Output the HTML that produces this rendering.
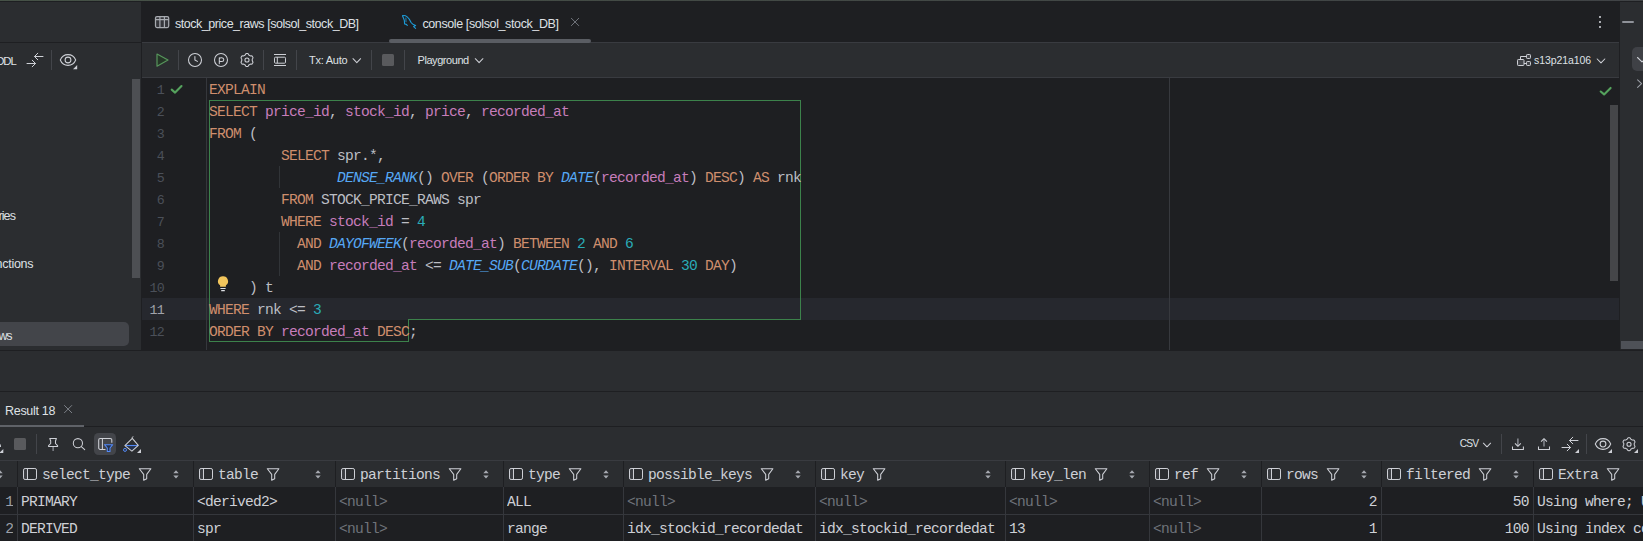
<!DOCTYPE html>
<html><head><meta charset="utf-8"><title>console</title>
<style>
html,body{margin:0;padding:0;background:#2b2d30;}
body{width:1643px;height:541px;position:relative;overflow:hidden;font-family:"Liberation Sans",sans-serif;font-size:12px;color:#dfe1e5;}
.a{position:absolute;}
.ui{position:absolute;white-space:pre;line-height:16px;height:16px;color:#dfe1e5;}
.ln{position:absolute;left:142px;width:22px;text-align:right;line-height:22px;height:22px;padding-top:2px;color:#4b5059;font-family:"Liberation Mono",monospace;font-size:13.3px;letter-spacing:-0.78px;}
.cl{position:absolute;left:209px;line-height:22px;height:22px;padding-top:0.5px;color:#bcbec4;font-family:"Liberation Mono",monospace;font-size:14.6px;letter-spacing:-0.76px;white-space:pre;}
.k{color:#cf8e6d}.c{color:#c77dbb}.f{color:#56a8f5;font-style:italic}.n{color:#2aacb8}
.sep{position:absolute;width:1px;background:#43454a;}
.g{position:absolute;background:#3c824b;}
.th{position:absolute;top:461px;height:26px;line-height:26px;padding-top:0.5px;font-family:"Liberation Mono",monospace;font-size:14.6px;letter-spacing:-0.76px;color:#ced0d6;white-space:pre;}
.td{position:absolute;height:26px;line-height:26px;padding-top:0.5px;box-sizing:border-box;font-family:"Liberation Mono",monospace;font-size:14.6px;letter-spacing:-0.76px;color:#ced0d6;white-space:pre;overflow:hidden;}
.nu{color:#6f737a}
.vs{position:absolute;width:1px;}
#ov{position:absolute;left:0;top:0;overflow:hidden}
</style></head><body>

<div class="a" style="left:0;top:0;width:1643px;height:1px;background:linear-gradient(90deg,#465247,#434a45 40%,#404346)"></div>
<div class="a" style="left:0;top:1px;width:1643px;height:1px;background:#1e1f22"></div>
<div class="a" style="left:0;top:42px;width:142px;height:1px;background:#1e1f22"></div>
<div class="a" style="left:141px;top:2px;width:1px;height:348px;background:#1e1f22"></div>
<div class="a" style="left:142px;top:2px;width:1478px;height:40px;background:#1e1f22"></div>
<div class="a" style="left:142px;top:42px;width:1478px;height:1px;background:#393b40"></div>
<div class="a" style="left:142px;top:77px;width:1478px;height:1px;background:#393b40"></div>
<div class="a" style="left:142px;top:78px;width:1478px;height:272px;background:#1e1f22"></div>
<div class="a" style="left:142px;top:298px;width:1477px;height:22px;background:#26282e"></div>
<div class="a" style="left:206px;top:78px;width:1px;height:272px;background:#35373c"></div>
<div class="a" style="left:1169px;top:78px;width:1px;height:272px;background:#37393e"></div>
<div class="a" style="left:1619px;top:2px;width:1px;height:348px;background:#1e1f22"></div>
<div class="a" style="left:0;top:350px;width:1643px;height:1px;background:#1e1f22"></div>
<div class="a" style="left:1620px;top:349px;width:23px;height:1px;background:#232427"></div>
<div class="a" style="left:0;top:391px;width:1643px;height:1px;background:#1e1f22"></div>
<div class="a" style="left:0;top:426px;width:1643px;height:1px;background:#1e1f22"></div>

<div class="a" style="left:132px;top:79px;width:8px;height:199px;background:#4d4f53"></div>
<div class="a" style="left:-6px;top:322px;width:135px;height:24px;background:#43454a;border-radius:5px"></div>
<div class="ui" style="left:-3.80px;top:53.08px;font-size:11.3px;letter-spacing:-1.003px;color:#dfe1e5;">DDL</div>
<div class="ui" style="left:-1.60px;top:207.67px;font-size:12.5px;letter-spacing:-0.889px;color:#dfe1e5;">ries</div>
<div class="ui" style="left:-4.50px;top:255.67px;font-size:12.5px;letter-spacing:-0.258px;color:#dfe1e5;">nctions</div>
<div class="ui" style="left:-1.50px;top:328.17px;font-size:12.5px;letter-spacing:-1.391px;color:#dfe1e5;">ws</div>
<div class="sep" style="left:51px;top:50px;height:20px"></div>
<div class="ui" style="left:175.00px;top:15.67px;font-size:12.5px;letter-spacing:-0.464px;color:#dfe1e5;">stock_price_raws [solsol_stock_DB]</div>
<div class="ui" style="left:422.40px;top:15.67px;font-size:12.5px;letter-spacing:-0.388px;color:#dfe1e5;">console [solsol_stock_DB]</div>
<div class="a" style="left:389px;top:39px;width:202px;height:4px;background:#5a5d63;border-radius:2px"></div>
<div class="sep" style="left:178px;top:50px;height:20px"></div>
<div class="sep" style="left:263px;top:50px;height:20px"></div>
<div class="sep" style="left:296px;top:50px;height:20px"></div>
<div class="ui" style="left:309.00px;top:52.19px;font-size:11px;letter-spacing:-0.257px;color:#dfe1e5;">Tx: Auto</div>
<div class="sep" style="left:371px;top:50px;height:20px"></div>
<div class="a" style="left:382px;top:54px;width:12px;height:12px;background:#595a5d;border-radius:1.5px"></div>
<div class="sep" style="left:404px;top:50px;height:20px"></div>
<div class="ui" style="left:417.50px;top:52.19px;font-size:11px;letter-spacing:-0.436px;color:#dfe1e5;">Playground</div>
<div class="ui" style="left:1534.00px;top:52.36px;font-size:10.5px;letter-spacing:-0.081px;color:#dfe1e5;">s13p21a106</div>
<div class="a" style="left:1622px;top:21px;width:12px;height:2px;background:#8f9299;border-radius:1px"></div>
<div class="a" style="left:1632px;top:47px;width:20px;height:24px;background:#3f4146;border-radius:5px"></div>
<div class="a" style="left:1621px;top:341px;width:22px;height:8px;background:#4e5157"></div>
<div class="a" style="left:1610px;top:105px;width:8px;height:176px;background:#454649"></div>
<div class="a" style="left:279px;top:166px;width:1px;height:22px;background:#313438"></div>
<div class="a" style="left:279px;top:232px;width:1px;height:44px;background:#313438"></div>
<div class="g" style="left:209px;top:100px;width:592px;height:1px"></div>
<div class="g" style="left:800px;top:100px;width:1px;height:220px"></div>
<div class="g" style="left:408px;top:319px;width:393px;height:1px"></div>
<div class="g" style="left:408px;top:319px;width:1px;height:23px"></div>
<div class="g" style="left:209px;top:341px;width:200px;height:1px"></div>
<div class="g" style="left:209px;top:100px;width:1px;height:242px"></div>
<div class="ln" style="top:78px;color:#4b5059">1</div><div class="cl" style="top:78px"><span class="k">EXPLAIN</span></div>
<div class="ln" style="top:100px;color:#4b5059">2</div><div class="cl" style="top:100px"><span class="k">SELECT</span> <span class="c">price_id</span>, <span class="c">stock_id</span>, <span class="c">price</span>, <span class="c">recorded_at</span></div>
<div class="ln" style="top:122px;color:#4b5059">3</div><div class="cl" style="top:122px"><span class="k">FROM</span> (</div>
<div class="ln" style="top:144px;color:#4b5059">4</div><div class="cl" style="top:144px">         <span class="k">SELECT</span> spr.*,</div>
<div class="ln" style="top:166px;color:#4b5059">5</div><div class="cl" style="top:166px">                <span class="f">DENSE_RANK</span>() <span class="k">OVER</span> (<span class="k">ORDER BY</span> <span class="f">DATE</span>(<span class="c">recorded_at</span>) <span class="k">DESC</span>) <span class="k">AS</span> rnk</div>
<div class="ln" style="top:188px;color:#4b5059">6</div><div class="cl" style="top:188px">         <span class="k">FROM</span> STOCK_PRICE_RAWS spr</div>
<div class="ln" style="top:210px;color:#4b5059">7</div><div class="cl" style="top:210px">         <span class="k">WHERE</span> <span class="c">stock_id</span> = <span class="n">4</span></div>
<div class="ln" style="top:232px;color:#4b5059">8</div><div class="cl" style="top:232px">           <span class="k">AND</span> <span class="f">DAYOFWEEK</span>(<span class="c">recorded_at</span>) <span class="k">BETWEEN</span> <span class="n">2</span> <span class="k">AND</span> <span class="n">6</span></div>
<div class="ln" style="top:254px;color:#4b5059">9</div><div class="cl" style="top:254px">           <span class="k">AND</span> <span class="c">recorded_at</span> &lt;= <span class="f">DATE_SUB</span>(<span class="f">CURDATE</span>(), <span class="k">INTERVAL</span> <span class="n">30</span> <span class="k">DAY</span>)</div>
<div class="ln" style="top:276px;color:#4b5059">10</div><div class="cl" style="top:276px">     ) t</div>
<div class="ln" style="top:298px;color:#a1a3ab">11</div><div class="cl" style="top:298px"><span class="k">WHERE</span> rnk &lt;= <span class="n">3</span></div>
<div class="ln" style="top:320px;color:#4b5059">12</div><div class="cl" style="top:320px"><span class="k">ORDER BY</span> <span class="c">recorded_at</span> <span class="k">DESC</span>;</div>
<div class="ui" style="left:5.00px;top:402.67px;font-size:12.5px;letter-spacing:-0.290px;color:#dfe1e5;">Result 18</div>
<div class="a" style="left:0;top:425px;width:84px;height:2px;background:#5f6268"></div>
<div class="a" style="left:14px;top:438px;width:12px;height:12px;background:#595a5d;border-radius:1.5px"></div>
<div class="sep" style="left:36px;top:434px;height:20px"></div>
<div class="a" style="left:94px;top:433px;width:22px;height:22px;background:#43454a;border-radius:4.5px"></div>
<div class="ui" style="left:1459.70px;top:436.47px;font-size:10.2px;letter-spacing:-0.784px;color:#dfe1e5;">CSV</div>
<div class="sep" style="left:1501px;top:434px;height:20px"></div>
<div class="sep" style="left:1586px;top:434px;height:20px"></div>
<div class="a" style="left:0;top:460px;width:1643px;height:1px;background:#393b40"></div>
<div class="a" style="left:0;top:487px;width:1643px;height:54px;background:#1e1f22"></div>
<div class="a" style="left:0;top:514px;width:1643px;height:1px;background:#35373c"></div>
<div class="td" style="left:0;top:488px;width:13.2px;text-align:right;color:#9da0a8">1</div>
<div class="td" style="left:0;top:515px;width:13.2px;text-align:right;color:#9da0a8">2</div>
<div class="vs" style="left:17px;top:461px;height:26px;background:#1e1f22"></div><div class="vs" style="left:17px;top:487px;height:54px;background:#35373c"></div>
<div class="th" style="left:42px">select_type</div>
<div class="td" style="left:21px;top:488px;width:172px">PRIMARY</div>
<div class="td" style="left:21px;top:515px;width:172px">DERIVED</div>
<div class="vs" style="left:193px;top:461px;height:26px;background:#1e1f22"></div><div class="vs" style="left:193px;top:487px;height:54px;background:#35373c"></div>
<div class="th" style="left:218px">table</div>
<div class="td" style="left:197px;top:488px;width:138px">&lt;derived2&gt;</div>
<div class="td" style="left:197px;top:515px;width:138px">spr</div>
<div class="vs" style="left:335px;top:461px;height:26px;background:#1e1f22"></div><div class="vs" style="left:335px;top:487px;height:54px;background:#35373c"></div>
<div class="th" style="left:360px">partitions</div>
<div class="td nu" style="left:339px;top:488px;width:164px">&lt;null&gt;</div>
<div class="td nu" style="left:339px;top:515px;width:164px">&lt;null&gt;</div>
<div class="vs" style="left:503px;top:461px;height:26px;background:#1e1f22"></div><div class="vs" style="left:503px;top:487px;height:54px;background:#35373c"></div>
<div class="th" style="left:528px">type</div>
<div class="td" style="left:507px;top:488px;width:116px">ALL</div>
<div class="td" style="left:507px;top:515px;width:116px">range</div>
<div class="vs" style="left:623px;top:461px;height:26px;background:#1e1f22"></div><div class="vs" style="left:623px;top:487px;height:54px;background:#35373c"></div>
<div class="th" style="left:648px">possible_keys</div>
<div class="td nu" style="left:627px;top:488px;width:188px">&lt;null&gt;</div>
<div class="td" style="left:627px;top:515px;width:188px">idx_stockid_recordedat</div>
<div class="vs" style="left:815px;top:461px;height:26px;background:#1e1f22"></div><div class="vs" style="left:815px;top:487px;height:54px;background:#35373c"></div>
<div class="th" style="left:840px">key</div>
<div class="td nu" style="left:819px;top:488px;width:186px">&lt;null&gt;</div>
<div class="td" style="left:819px;top:515px;width:186px">idx_stockid_recordedat</div>
<div class="vs" style="left:1005px;top:461px;height:26px;background:#1e1f22"></div><div class="vs" style="left:1005px;top:487px;height:54px;background:#35373c"></div>
<div class="th" style="left:1030px">key_len</div>
<div class="td nu" style="left:1009px;top:488px;width:140px">&lt;null&gt;</div>
<div class="td" style="left:1009px;top:515px;width:140px">13</div>
<div class="vs" style="left:1149px;top:461px;height:26px;background:#1e1f22"></div><div class="vs" style="left:1149px;top:487px;height:54px;background:#35373c"></div>
<div class="th" style="left:1174px">ref</div>
<div class="td nu" style="left:1153px;top:488px;width:108px">&lt;null&gt;</div>
<div class="td nu" style="left:1153px;top:515px;width:108px">&lt;null&gt;</div>
<div class="vs" style="left:1261px;top:461px;height:26px;background:#1e1f22"></div><div class="vs" style="left:1261px;top:487px;height:54px;background:#35373c"></div>
<div class="th" style="left:1286px">rows</div>
<div class="td" style="left:1262px;top:488px;width:114.8px;text-align:right">2</div>
<div class="td" style="left:1262px;top:515px;width:114.8px;text-align:right">1</div>
<div class="vs" style="left:1381px;top:461px;height:26px;background:#1e1f22"></div><div class="vs" style="left:1381px;top:487px;height:54px;background:#35373c"></div>
<div class="th" style="left:1406px">filtered</div>
<div class="td" style="left:1382px;top:488px;width:146.8px;text-align:right">50</div>
<div class="td" style="left:1382px;top:515px;width:146.8px;text-align:right">100</div>
<div class="vs" style="left:1533px;top:461px;height:26px;background:#1e1f22"></div><div class="vs" style="left:1533px;top:487px;height:54px;background:#35373c"></div>
<div class="th" style="left:1558px">Extra</div>
<div class="td" style="left:1537px;top:488px;width:163px">Using where; Using filesort</div>
<div class="td" style="left:1537px;top:515px;width:163px">Using index condition; Using where</div>
<svg id="ov" width="1643" height="541" viewBox="0 0 1643 541">
<path d="M43 56.5H34.6M37.8 53.2L34.5 56.5L37.8 59.8M27 63.5H35.4M32.2 60.2L35.5 63.5L32.2 66.8" fill="none" stroke="#ced0d6" stroke-width="1" stroke-linecap="round" stroke-linejoin="round"/>
<path d="M60.3 60C63.226 52.832 72.774 52.832 75.7 60C72.774 67.168 63.226 67.168 60.3 60Z" fill="none" stroke="#ced0d6" stroke-width="1.05"/><circle cx="68" cy="60" r="2.9" fill="none" stroke="#ced0d6" stroke-width="1.05"/>
<path d="M77.2 65.1V69.3H73.0Z" fill="#ced0d6"/>
<rect x="155.5" y="16.500" width="13.200" height="11" rx="1.500" fill="#36373c" stroke="#a8abb1" stroke-width="1.250"/><path d="M155.500 19.600H168.700M159.900 16.500V27.500M164.400 16.500V27.500" stroke="#a8abb1" stroke-width="1.200" fill="none"/>
<g transform="translate(401 14)" fill="none" stroke="#1d9bd7" stroke-width="1.1" stroke-linecap="round" stroke-linejoin="round"><path d="M1.6 1.8C3 1.2 4.8 1.8 6.2 2.9C8 4.3 9.2 6.4 10.1 8.5C11 10 13 10.9 14.6 11.6L12.6 12.6L14.6 14.3"/><path d="M1.6 1.8C2 3.3 2.9 4.7 3.3 6.3C3.6 7.7 3.3 9 3.7 10C4.6 10.3 5.6 10.1 6.3 11.4"/><path d="M4.9 4C5 5.5 4.900 6.5 5 7.8" stroke-width="0.8"/></g>
<path d="M571.4 18.3L578.6999999999999 25.6M578.6999999999999 18.3L571.4 25.6" stroke="#72767d" stroke-width="1" stroke-linecap="round"/>
<circle cx="1600" cy="17" r="1.05" fill="#ced0d6"/><circle cx="1600" cy="22" r="1.05" fill="#ced0d6"/><circle cx="1600" cy="27" r="1.05" fill="#ced0d6"/>
<path d="M157 54L168 60L157 66.2Z" fill="#253627" stroke="#57965c" stroke-width="1.2" stroke-linejoin="round"/>
<circle cx="195" cy="60" r="6.5" fill="none" stroke="#ced0d6" stroke-width="1.05"/><path d="M194.9 56.6V60L197.4 61.4" fill="none" stroke="#ced0d6" stroke-width="1.05" stroke-linecap="round" stroke-linejoin="round"/>
<circle cx="221" cy="60" r="6.5" fill="none" stroke="#ced0d6" stroke-width="1.05"/><path d="M219.3 63.6V57.8M219.3 58.6C220 57.6 223.8 57.2 223.8 59.7C223.8 62.2 220 61.800 219.3 60.8" fill="none" stroke="#ced0d6" stroke-width="1.05" stroke-linecap="round"/>
<path d="M252.25 60L252.24 59.66L252.21 59.31L252.35 58.93L252.65 58.49L252.91 57.99L252.96 57.53L252.78 57.15L252.59 56.77L252.36 56.42L252.12 56.07L251.69 55.89L251.14 55.86L250.6 55.9L250.2 55.83L249.92 55.63L249.62 55.45L249.32 55.29L249.01 55.15L248.75 54.83L248.51 54.35L248.22 53.88L247.84 53.61L247.42 53.56L247 53.55L246.58 53.56L246.16 53.61L245.78 53.88L245.49 54.35L245.25 54.83L244.99 55.15L244.68 55.29L244.38 55.45L244.08 55.63L243.8 55.83L243.4 55.9L242.86 55.86L242.31 55.89L241.88 56.07L241.64 56.42L241.41 56.77L241.22 57.15L241.04 57.53L241.09 57.99L241.35 58.49L241.65 58.93L241.79 59.31L241.76 59.66L241.75 60L241.76 60.34L241.79 60.69L241.65 61.07L241.35 61.51L241.09 62.01L241.04 62.47L241.22 62.85L241.41 63.22L241.64 63.58L241.88 63.93L242.31 64.11L242.86 64.14L243.4 64.1L243.8 64.17L244.08 64.37L244.38 64.55L244.68 64.71L244.99 64.85L245.25 65.17L245.49 65.65L245.78 66.12L246.16 66.39L246.58 66.44L247 66.45L247.42 66.44L247.84 66.39L248.22 66.12L248.51 65.65L248.75 65.17L249.01 64.85L249.32 64.71L249.62 64.55L249.92 64.37L250.2 64.17L250.6 64.1L251.14 64.14L251.69 64.11L252.12 63.93L252.36 63.58L252.59 63.23L252.78 62.85L252.96 62.47L252.91 62.01L252.65 61.51L252.35 61.07L252.21 60.69L252.24 60.34Z" fill="none" stroke="#ced0d6" stroke-width="1.05" stroke-linejoin="round"/><circle cx="247" cy="60" r="2.05" fill="none" stroke="#ced0d6" stroke-width="1.05"/>
<path d="M274 54.5H286M274 65.5H286M277.3 57.2V63.2" stroke="#ced0d6" fill="none"/><rect x="274.5" y="57.2" width="11" height="6" rx="1" fill="none" stroke="#ced0d6"/>
<path d="M353 58.7L356.8 62.6L360.6 58.7" fill="none" stroke="#ced0d6" stroke-width="1.05" stroke-linecap="round" stroke-linejoin="round"/>
<path d="M475.3 58.7L479.1 62.6L482.90000000000003 58.7" fill="none" stroke="#ced0d6" stroke-width="1.05" stroke-linecap="round" stroke-linejoin="round"/>
<rect x="1517.5" y="59.5" width="6.5" height="6" rx="0.8" fill="#43454a" stroke="#ced0d6"/><rect x="1526.500" y="54.5" width="4" height="4" rx="0.8" fill="#43454a" stroke="#ced0d6"/><rect x="1526.5" y="61.5" width="4" height="4" rx="0.8" fill="#43454a" stroke="#ced0d6"/><path d="M1520.5 59.5V56.5H1526.5M1524 63.5H1526.5" fill="none" stroke="#ced0d6"/>
<path d="M1597.2 59L1601.0 62.9L1604.8 59" fill="none" stroke="#ced0d6" stroke-width="1.05" stroke-linecap="round" stroke-linejoin="round"/>
<path d="M1637.5 57.5L1642.0 61.9L1646.5 57.5" fill="none" stroke="#ced0d6" stroke-width="1.05" stroke-linecap="round" stroke-linejoin="round"/>
<path d="M1637.6 79.8L1641.6 83.6L1637.6 87.400" fill="none" stroke="#9da0a8" stroke-width="1.05" stroke-linecap="round" stroke-linejoin="round"/>
<path d="M1600.700 91.500L1604.100 94.400L1610.600 87.900" fill="none" stroke="#55a25d" stroke-width="2.1" stroke-linecap="round" stroke-linejoin="round"/>
<path d="M171.700 89.600L175.100 92.600L181.500 86" fill="none" stroke="#55a25d" stroke-width="2.1" stroke-linecap="round" stroke-linejoin="round"/>
<path d="M223 276.200A5 5 0 0 0 220.100 285.300V286.800H225.900V285.300A5 5 0 0 0 223 276.200Z" fill="#f2c55c"/><path d="M220.400 288.500H225.600M221.200 290.600H224.800" stroke="#dfe1e5" stroke-width="1.1" fill="none"/>
<path d="M64.5 405.5L71.7 412.7M71.7 405.5L64.5 412.7" stroke="#7d8188" stroke-width="1" stroke-linecap="round"/>
<path d="M-3 443A4 4 0 0 1 0.5 447" fill="none" stroke="#ced0d6" stroke-width="1.1"/>
<path d="M3.3 449V453H-0.7000000000000002Z" fill="#ced0d6"/>
<path d="M49.8 438.5H56.4L55.500 441V443.500L57.600 445.700V446.5H48.600V445.700L50.700 443.5V441Z" fill="none" stroke="#ced0d6" stroke-width="1.05" stroke-linejoin="round"/><path d="M53.1 447V451" stroke="#9da0a8" stroke-width="1.1" fill="none"/>
<circle cx="77.9" cy="443.2" r="4.6" fill="none" stroke="#ced0d6" stroke-width="1.05"/><path d="M81.3 446.6L84.7 449.700" stroke="#ced0d6" stroke-width="1.05" stroke-linecap="round"/>
<path d="M105.5 449.400H100.200A1.500 1.500 0 0 1 98.700 447.900V440A1.500 1.500 0 0 1 100.200 438.500H110.300A1.500 1.500 0 0 1 111.800 440V442.800M102.400 438.500V449.400" fill="none" stroke="#ced0d6" stroke-width="1.05"/><path d="M104.500 444.700H112.700L110 448V451.500H107.300V448Z" fill="#25324d" stroke="#548af7" stroke-width="1.05" stroke-linejoin="round"/>
<path d="M125.600 445.500H138L131.900 450.900Z" fill="#25324d"/><path d="M125.400 445.500H138.100" stroke="#548af7" stroke-width="1.1" fill="none"/><path d="M132.300 438.300L138.300 445.300L131.900 451.100L124.900 445.600Z" fill="none" stroke="#ced0d6" stroke-width="1.05" stroke-linejoin="round"/><path d="M131.700 437.600L133.400 436.700" stroke="#ced0d6" stroke-width="1" fill="none"/><circle cx="125" cy="449.900" r="1.500" fill="none" stroke="#548af7" stroke-width="1"/>
<path d="M141 449V453H137Z" fill="#ced0d6"/>
<path d="M1483.4 443.2L1487.0 446.8L1490.6000000000001 443.2" fill="none" stroke="#ced0d6" stroke-width="1.05" stroke-linecap="round" stroke-linejoin="round"/>
<path d="M1517.900 438.500V446" stroke="#9da0a8" stroke-width="1.2" fill="none"/><path d="M1515 443.400L1517.900 446.300L1520.800 443.400M1512.500 446.500V449.400H1523.400V446.500" fill="none" stroke="#ced0d6" stroke-width="1.05" stroke-linejoin="round"/>
<path d="M1544 446.500V439" stroke="#9da0a8" stroke-width="1.2" fill="none"/><path d="M1541.100 441.600L1544 438.700L1546.900 441.600M1538.500 446.500V449.400H1549.500V446.500" fill="none" stroke="#ced0d6" stroke-width="1.05" stroke-linejoin="round"/>
<path d="M1578 440.5H1569.6M1572.8 437.2L1569.5 440.5L1572.8 443.8M1562 447.5H1570.4M1567.2 444.2L1570.5 447.5L1567.2 450.8" fill="none" stroke="#ced0d6" stroke-width="1" stroke-linecap="round" stroke-linejoin="round"/>
<path d="M1579 449V453H1575Z" fill="#ced0d6"/>
<path d="M1595.3 444C1598.226 436.832 1607.774 436.832 1610.7 444C1607.774 451.168 1598.226 451.168 1595.3 444Z" fill="none" stroke="#ced0d6" stroke-width="1.05"/><circle cx="1603" cy="444" r="2.9" fill="none" stroke="#ced0d6" stroke-width="1.05"/>
<path d="M1612 449V453H1608Z" fill="#ced0d6"/>
<path d="M1634.25 444.2L1634.24 443.86L1634.21 443.51L1634.35 443.13L1634.65 442.69L1634.91 442.19L1634.96 441.73L1634.78 441.35L1634.59 440.97L1634.36 440.62L1634.12 440.27L1633.69 440.09L1633.14 440.06L1632.6 440.1L1632.2 440.03L1631.92 439.83L1631.62 439.65L1631.32 439.49L1631.01 439.35L1630.75 439.03L1630.51 438.55L1630.22 438.08L1629.84 437.81L1629.42 437.76L1629 437.75L1628.58 437.76L1628.16 437.81L1627.78 438.08L1627.49 438.55L1627.25 439.03L1626.99 439.35L1626.68 439.49L1626.38 439.65L1626.08 439.83L1625.8 440.03L1625.4 440.1L1624.86 440.06L1624.31 440.09L1623.88 440.27L1623.64 440.62L1623.41 440.97L1623.22 441.35L1623.04 441.73L1623.09 442.19L1623.35 442.69L1623.65 443.13L1623.79 443.51L1623.76 443.86L1623.75 444.2L1623.76 444.54L1623.79 444.89L1623.65 445.27L1623.35 445.71L1623.09 446.21L1623.04 446.67L1623.22 447.05L1623.41 447.43L1623.64 447.78L1623.88 448.13L1624.31 448.31L1624.86 448.34L1625.4 448.3L1625.8 448.37L1626.08 448.57L1626.38 448.75L1626.68 448.91L1626.99 449.05L1627.25 449.37L1627.49 449.85L1627.78 450.32L1628.16 450.59L1628.58 450.64L1629 450.65L1629.42 450.64L1629.84 450.59L1630.22 450.32L1630.51 449.85L1630.75 449.37L1631.01 449.05L1631.32 448.91L1631.62 448.75L1631.92 448.57L1632.2 448.37L1632.6 448.3L1633.14 448.34L1633.69 448.31L1634.12 448.13L1634.36 447.78L1634.59 447.43L1634.78 447.05L1634.96 446.67L1634.91 446.21L1634.65 445.71L1634.35 445.27L1634.21 444.89L1634.24 444.54Z" fill="none" stroke="#ced0d6" stroke-width="1.05" stroke-linejoin="round"/><circle cx="1629" cy="444.2" r="2.05" fill="none" stroke="#ced0d6" stroke-width="1.05"/>
<path d="M1638 449V453H1634Z" fill="#ced0d6"/>
<path d="M0 470.2L2.7 473.200H-2.7ZM0 478.400L2.7 475.400H-2.7Z" fill="#a6a9b0"/>
<rect x="23.5" y="468.5" width="4" height="11" fill="#3c3e43"/><rect x="23.5" y="468.5" width="13" height="11" rx="1.6" fill="none" stroke="#ced0d6"/><path d="M27.5 468.5V479.5" stroke="#ced0d6" fill="none"/>
<path d="M139.3 468.7H150.9L146.7 474.400V478.700L143.7 480.200V474.400Z" fill="none" stroke="#ced0d6" stroke-width="1.05" stroke-linejoin="round"/>
<path d="M176 470.2L178.7 473.200H173.3ZM176 478.400L178.7 475.400H173.3Z" fill="#a6a9b0"/>
<rect x="199.5" y="468.5" width="4" height="11" fill="#3c3e43"/><rect x="199.5" y="468.5" width="13" height="11" rx="1.6" fill="none" stroke="#ced0d6"/><path d="M203.5 468.5V479.5" stroke="#ced0d6" fill="none"/>
<path d="M267.3 468.7H278.9L274.7 474.400V478.700L271.7 480.200V474.400Z" fill="none" stroke="#ced0d6" stroke-width="1.05" stroke-linejoin="round"/>
<path d="M318 470.2L320.7 473.200H315.3ZM318 478.400L320.7 475.400H315.3Z" fill="#a6a9b0"/>
<rect x="341.5" y="468.5" width="4" height="11" fill="#3c3e43"/><rect x="341.5" y="468.5" width="13" height="11" rx="1.6" fill="none" stroke="#ced0d6"/><path d="M345.5 468.5V479.5" stroke="#ced0d6" fill="none"/>
<path d="M449.3 468.7H460.9L456.7 474.400V478.700L453.7 480.200V474.400Z" fill="none" stroke="#ced0d6" stroke-width="1.05" stroke-linejoin="round"/>
<path d="M486 470.2L488.7 473.200H483.3ZM486 478.400L488.7 475.400H483.3Z" fill="#a6a9b0"/>
<rect x="509.5" y="468.5" width="4" height="11" fill="#3c3e43"/><rect x="509.5" y="468.5" width="13" height="11" rx="1.6" fill="none" stroke="#ced0d6"/><path d="M513.5 468.5V479.5" stroke="#ced0d6" fill="none"/>
<path d="M569.3 468.7H580.9L576.7 474.400V478.700L573.7 480.200V474.400Z" fill="none" stroke="#ced0d6" stroke-width="1.05" stroke-linejoin="round"/>
<path d="M606 470.2L608.7 473.200H603.3ZM606 478.400L608.7 475.400H603.3Z" fill="#a6a9b0"/>
<rect x="629.5" y="468.5" width="4" height="11" fill="#3c3e43"/><rect x="629.5" y="468.5" width="13" height="11" rx="1.6" fill="none" stroke="#ced0d6"/><path d="M633.5 468.5V479.5" stroke="#ced0d6" fill="none"/>
<path d="M761.3 468.7H772.9L768.7 474.400V478.700L765.7 480.200V474.400Z" fill="none" stroke="#ced0d6" stroke-width="1.05" stroke-linejoin="round"/>
<path d="M798 470.2L800.7 473.200H795.3ZM798 478.400L800.7 475.400H795.3Z" fill="#a6a9b0"/>
<rect x="821.5" y="468.5" width="4" height="11" fill="#3c3e43"/><rect x="821.5" y="468.5" width="13" height="11" rx="1.6" fill="none" stroke="#ced0d6"/><path d="M825.5 468.5V479.5" stroke="#ced0d6" fill="none"/>
<path d="M873.3 468.7H884.9L880.7 474.400V478.700L877.7 480.200V474.400Z" fill="none" stroke="#ced0d6" stroke-width="1.05" stroke-linejoin="round"/>
<path d="M988 470.2L990.7 473.200H985.3ZM988 478.400L990.7 475.400H985.3Z" fill="#a6a9b0"/>
<rect x="1011.5" y="468.5" width="4" height="11" fill="#3c3e43"/><rect x="1011.5" y="468.5" width="13" height="11" rx="1.6" fill="none" stroke="#ced0d6"/><path d="M1015.5 468.5V479.5" stroke="#ced0d6" fill="none"/>
<path d="M1095.3 468.7H1106.9L1102.7 474.400V478.700L1099.7 480.200V474.400Z" fill="none" stroke="#ced0d6" stroke-width="1.05" stroke-linejoin="round"/>
<path d="M1132 470.2L1134.7 473.200H1129.3ZM1132 478.400L1134.7 475.400H1129.3Z" fill="#a6a9b0"/>
<rect x="1155.5" y="468.5" width="4" height="11" fill="#3c3e43"/><rect x="1155.5" y="468.5" width="13" height="11" rx="1.6" fill="none" stroke="#ced0d6"/><path d="M1159.5 468.5V479.5" stroke="#ced0d6" fill="none"/>
<path d="M1207.3 468.7H1218.9L1214.7 474.400V478.700L1211.7 480.200V474.400Z" fill="none" stroke="#ced0d6" stroke-width="1.05" stroke-linejoin="round"/>
<path d="M1244 470.2L1246.7 473.200H1241.3ZM1244 478.400L1246.7 475.400H1241.3Z" fill="#a6a9b0"/>
<rect x="1267.5" y="468.5" width="4" height="11" fill="#3c3e43"/><rect x="1267.5" y="468.5" width="13" height="11" rx="1.6" fill="none" stroke="#ced0d6"/><path d="M1271.5 468.5V479.5" stroke="#ced0d6" fill="none"/>
<path d="M1327.3 468.7H1338.9L1334.7 474.400V478.700L1331.7 480.200V474.400Z" fill="none" stroke="#ced0d6" stroke-width="1.05" stroke-linejoin="round"/>
<path d="M1364 470.2L1366.7 473.200H1361.3ZM1364 478.400L1366.7 475.400H1361.3Z" fill="#a6a9b0"/>
<rect x="1387.5" y="468.5" width="4" height="11" fill="#3c3e43"/><rect x="1387.5" y="468.5" width="13" height="11" rx="1.6" fill="none" stroke="#ced0d6"/><path d="M1391.5 468.5V479.5" stroke="#ced0d6" fill="none"/>
<path d="M1479.3 468.7H1490.9L1486.7 474.400V478.700L1483.7 480.200V474.400Z" fill="none" stroke="#ced0d6" stroke-width="1.05" stroke-linejoin="round"/>
<path d="M1516 470.2L1518.7 473.200H1513.3ZM1516 478.400L1518.7 475.400H1513.3Z" fill="#a6a9b0"/>
<rect x="1539.5" y="468.5" width="4" height="11" fill="#3c3e43"/><rect x="1539.5" y="468.5" width="13" height="11" rx="1.6" fill="none" stroke="#ced0d6"/><path d="M1543.5 468.5V479.5" stroke="#ced0d6" fill="none"/>
<path d="M1607.3 468.7H1618.9L1614.7 474.400V478.700L1611.7 480.200V474.400Z" fill="none" stroke="#ced0d6" stroke-width="1.05" stroke-linejoin="round"/>
</svg>
</body></html>
